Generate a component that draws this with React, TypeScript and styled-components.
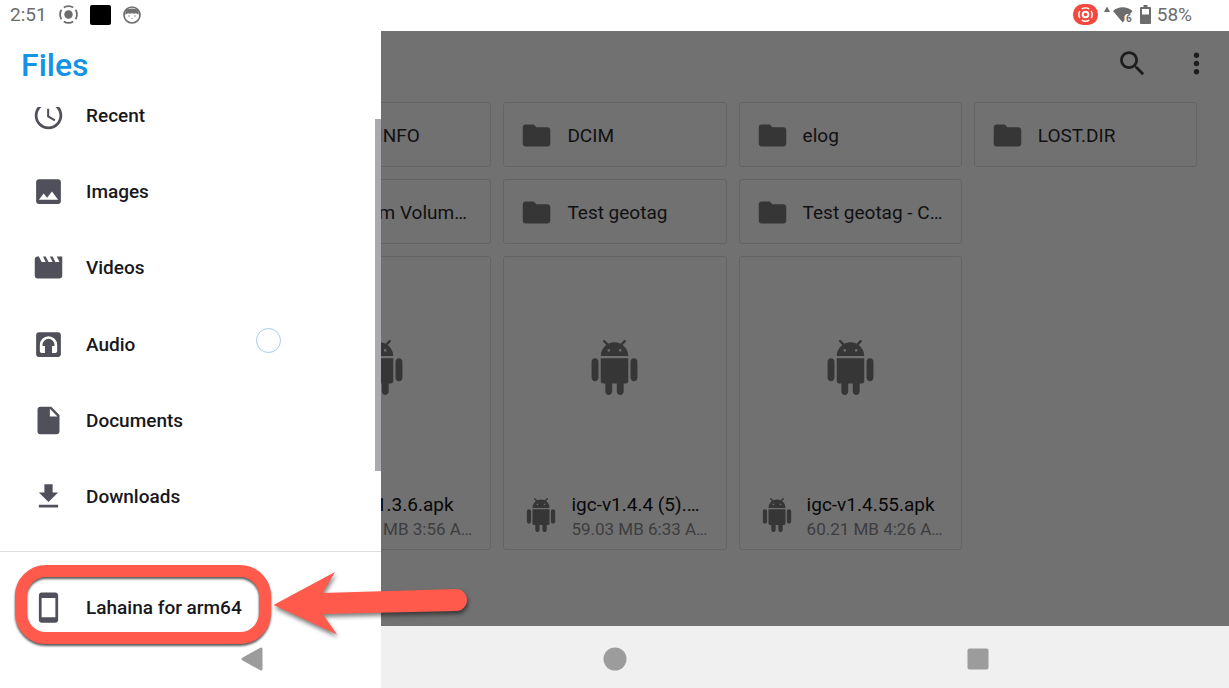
import React from "react";
import styled, { createGlobalStyle } from "styled-components";

const GlobalStyle = createGlobalStyle`
  * { box-sizing: border-box; }
  body { margin: 0; font-family: Roboto, "Liberation Sans", sans-serif; background: #fff; }
  button { font: inherit; color: inherit; background: none; border: 0; padding: 0; cursor: pointer; }
  ul { list-style: none; margin: 0; padding: 0; }
  h1, p { margin: 0; }
  svg { display: block; flex: none; }
`;

const paths = {
  clock:
    "M11.99 2C6.47 2 2 6.48 2 12s4.47 10 9.99 10C17.52 22 22 17.52 22 12S17.52 2 11.99 2zM12 20c-4.42 0-8-3.58-8-8s3.58-8 8-8 8 3.58 8 8-3.58 8-8 8zm.5-13H11v6l5.25 3.15.75-1.23-4.5-2.67z",
  image:
    "M21 19V5c0-1.1-.9-2-2-2H5c-1.1 0-2 .9-2 2v14c0 1.1.9 2 2 2h14c1.1 0 2-.9 2-2zM8.5 13.5l2.5 3.01L14.5 12l4.5 6H5l3.5-4.5z",
  movie:
    "M18 4l2 4h-3l-2-4h-2l2 4h-3l-2-4H8l2 4H7L5 4H4c-1.1 0-1.99.9-1.99 2L2 18c0 1.1.9 2 2 2h16c1.1 0 2-.9 2-2V4h-4z",
  audio:
    "M19 3H5c-1.1 0-2 .9-2 2v14c0 1.1.9 2 2 2h14c1.1 0 2-.9 2-2V5c0-1.1-.9-2-2-2zM14.6 18.2v-5.1h1.8v-.8a4.4 4.4 0 0 0-8.8 0v.8h1.8v5.1H7.1c-.8 0-1.4-.6-1.4-1.4v-4.5a6.3 6.3 0 0 1 12.6 0v4.5c0 .8-.6 1.4-1.4 1.4z",
  file: "M6 2c-1.1 0-1.99.9-1.99 2L4 20c0 1.1.89 2 1.99 2H18c1.1 0 2-.9 2-2V8l-6-6H6zm7 7V3.5L18.5 9H13z",
  download: "M19 9h-4V3H9v6H5l7 7 7-7zM5 18v2h14v-2H5z",
  phone:
    "M17 1.01L7 1c-1.1 0-2 .9-2 2v18c0 1.1.9 2 2 2h10c1.1 0 2-.9 2-2V3c0-1.1-.9-1.99-2-1.99zM17 19H7V5h10v14z",
  folder:
    "M10 4H4c-1.1 0-1.99.9-1.99 2L2 18c0 1.1.9 2 2 2h16c1.1 0 2-.9 2-2V8c0-1.1-.9-2-2-2h-8l-2-2z",
  search:
    "M15.5 14h-.79l-.28-.27C15.41 12.59 16 11.11 16 9.5 16 5.91 13.09 3 9.5 3S3 5.91 3 9.5 5.91 16 9.5 16c1.61 0 3.09-.59 4.23-1.57l.27.28v.79l5 4.99L20.49 19l-4.99-5zm-6 0C7.01 14 5 11.99 5 9.5S7.01 5 9.5 5 14 7.01 14 9.5 11.99 14 9.5 14z",
  more: "M12 8c1.1 0 2-.9 2-2s-.9-2-2-2-2 .9-2 2 .9 2 2 2zm0 2c-1.1 0-2 .9-2 2s.9 2 2 2 2-.9 2-2-.9-2-2-2zm0 6c-1.1 0-2 .9-2 2s.9 2 2 2 2-.9 2-2-.9-2-2-2z",
  android:
    "M6 18c0 .55.45 1 1 1h1v3.5c0 .83.67 1.5 1.5 1.5s1.5-.67 1.5-1.5V19h2v3.5c0 .83.67 1.5 1.5 1.5s1.5-.67 1.5-1.5V19h1c.55 0 1-.45 1-1V8H6v10zM3.5 8C2.67 8 2 8.67 2 9.5v7c0 .83.67 1.5 1.5 1.5S5 17.33 5 16.5v-7C5 8.67 4.33 8 3.5 8zm17 0c-.83 0-1.5.67-1.5 1.5v7c0 .83.67 1.5 1.5 1.5s1.5-.67 1.5-1.5v-7c0-.83-.67-1.5-1.5-1.5zm-4.97-5.84l1.3-1.3c.2-.2.2-.51 0-.71-.2-.2-.51-.2-.71 0l-1.48 1.48C13.85 1.23 12.95 1 12 1c-.96 0-1.86.23-2.66.63L7.85.15c-.2-.2-.51-.2-.71 0-.2.2-.2.51 0 .71l1.31 1.31C6.97 3.26 6 5.01 6 7h12c0-1.99-.97-3.75-2.47-4.84zM10 5H9V4h1v1zm5 0h-1V4h1v1z",
};

type IconName = keyof typeof paths;

function Icon({ name, size = 33 }: { name: IconName; size?: number }) {
  return (
    <svg width={size} height={size} viewBox="0 0 24 24" fill="currentColor" aria-hidden="true">
      <path fillRule="evenodd" d={paths[name]} />
    </svg>
  );
}

const Screen = styled.div`
  position: relative;
  display: flex;
  flex-direction: column;
  min-height: 100vh;
  overflow: hidden;
`;

/* Status bar */

const StatusBar = styled.header`
  display: flex;
  justify-content: space-between;
  height: 31px;
  padding: 0 37px 2px 10px;
  color: #6c6c6c;
  font-size: 19px;
  line-height: 30px;
`;

const StatusGroup = styled.div<{ $gap: number }>`
  display: flex;
  align-items: center;
  gap: ${(p) => p.$gap}px;
`;

const BlackSquare = styled.span`
  width: 21px;
  height: 20px;
  border-radius: 2px;
  background: #000;
`;

const CastBadge = styled.span`
  display: grid;
  place-items: center;
  width: 25px;
  height: 21px;
  border-radius: 10px;
  background: #f04a3e;
  color: #fff;
`;

function RingIcon({ size, hollow }: { size: number; hollow?: boolean }) {
  return (
    <svg width={size} height={size} viewBox="0 0 18 18" aria-hidden="true">
      {hollow ? (
        <circle cx="9" cy="9" r="3.400" fill="none" stroke="currentColor" strokeWidth="2.400" />
      ) : (
        <circle cx="9" cy="9" r="4" fill="currentColor" />
      )}
      <circle
        cx="9"
        cy="9"
        r="8"
        fill="none"
        stroke="currentColor"
        strokeWidth="1.700"
        pathLength="80"
        strokeDasharray="15 5"
        strokeDashoffset="7.500"
      />
    </svg>
  );
}

function CatIcon() {
  return (
    <svg width="18" height="18" viewBox="0 0 18 18" aria-hidden="true">
      <circle cx="9" cy="9" r="8" fill="#fff" stroke="#707070" strokeWidth="1.700" />
      <path d="M3 3.500L5.500 3Q9 2.200 12.500 3L15 3.500L15.800 8.800L13 7.300L11.500 7.700L9 7.200L6.500 7.700L5 7.300L2.200 8.800z" fill="#707070" />
      <circle cx="6" cy="10" r=".7" fill="#707070" />
      <circle cx="12" cy="10" r=".7" fill="#707070" />
      <circle cx="9" cy="12.500" r=".6" fill="#707070" />
    </svg>
  );
}

function WifiIcon() {
  return (
    <svg width="30" height="20" viewBox="0 0 30 20" aria-hidden="true">
      <path d="M3 1.500L6 7H0z" fill="currentColor" />
      <path d="M9 6C14.500 1 23 1 28.500 6L26 9h-3.500l-2 2v4.500L18.700 17.500z" fill="currentColor" />
      <text x="22" y="17" fontSize="10" fontWeight="700" fill="currentColor">
        6
      </text>
    </svg>
  );
}

function BatteryIcon() {
  return (
    <svg width="11" height="19" viewBox="0 0 11 19" aria-hidden="true">
      <path
        fillRule="evenodd"
        d="M3.500 0h4v2H10q1 0 1 1v15q0 1-1 1H1q-1 0-1-1V3q0-1 1-1h2.500zM2 4v5.500h7V4z"
        fill="currentColor"
      />
    </svg>
  );
}

/* File browser behind the drawer */

const Browser = styled.main`
  flex: 1;
  background: #717171;
  color: #101012;
`;

const Toolbar = styled.div`
  display: flex;
  justify-content: flex-end;
  align-items: center;
  gap: 31px;
  height: 64px;
  padding-right: 16px;
  color: #1d1d20;
`;

const FileGrid = styled.div`
  display: grid;
  grid-template-columns: repeat(5, minmax(0, 1fr));
  gap: 12px;
  padding: 7px 32px 12px 33px;
`;

const cardFrame = `
  border: 1px solid #646464;
  border-radius: 3px;
  overflow: hidden;
  white-space: nowrap;
  text-align: left;
`;

const FolderCard = styled.button<{ $column: number }>`
  ${cardFrame}
  grid-column: ${(p) => p.$column};
  display: flex;
  align-items: center;
  gap: 14px;
  height: 65px;
  padding: 1px 16px 0;
  font-size: 19px;

  svg { color: #363636; }
`;

const FileCard = styled.button<{ $column: number }>`
  ${cardFrame}
  grid-column: ${(p) => p.$column};
  display: flex;
  flex-direction: column;
`;

const Preview = styled.span`
  display: grid;
  place-items: center;
  width: 100%;
  aspect-ratio: 1;
  color: #363636;
`;

const FileFooter = styled.span`
  display: flex;
  align-items: center;
  gap: 13px;
  height: 71px;
  padding: 2px 20px 0;

  svg { color: #363636; }
`;

const FileText = styled.span`
  display: flex;
  flex-direction: column;
  padding-top: 4px;
  line-height: 24px;
`;

const FileName = styled.span`
  color: #070708;
  font-size: 19px;
`;

const FileMeta = styled.span`
  color: #3d3d3f;
  font-size: 17px;
`;

/* System navigation */

const NavBar = styled.nav`
  display: grid;
  grid-template-columns: repeat(3, 1fr);
  height: 62px;
  padding: 0 70px 0 71px;
  background: #f0f0f0;
  color: #9c9c9c;
`;

const NavButton = styled.button<{ $raised?: boolean }>`
  display: grid;
  place-items: center;
  padding-top: 4px;
  ${(p) => p.$raised && "position: relative; z-index: 3;"}
`;

/* Drawer */

const Drawer = styled.aside`
  position: absolute;
  z-index: 2;
  top: 31px;
  bottom: 0;
  left: 0;
  display: flex;
  flex-direction: column;
  width: 31%;
  background: #fff;
  color: #18181c;
`;

const DrawerTitle = styled.h1`
  height: 76px;
  padding: 14px 21px 0;
  color: #1492e6;
  font-size: 32px;
  font-weight: 500;
  line-height: 40px;
`;

const RootsViewport = styled.div`
  position: relative;
  display: flex;
  flex: 1;
  overflow: hidden;
`;

const RootsList = styled.ul`
  display: flex;
  flex: 1;
  flex-direction: column;
  margin-top: -30px;
  margin-bottom: 16px;
`;

const RootItem = styled.li`
  display: flex;
  flex: 1;
`;

const RootButton = styled.button`
  display: flex;
  flex: 1;
  align-items: center;
  gap: 21px;
  min-height: 76px;
  padding-left: 32px;
  font-size: 19px;
  font-weight: 500;
  white-space: nowrap;

  svg { color: #50505a; }
`;

const ScrollThumb = styled.span`
  position: absolute;
  top: 12px;
  right: 0;
  bottom: 80px;
  width: 6px;
  background: #a8a8ad;
`;

const TouchRing = styled.span`
  position: absolute;
  top: 221px;
  left: 256px;
  width: 25px;
  height: 25px;
  border: 1px solid #a9c9f4;
  border-radius: 50%;
`;

const DeviceSection = styled.div`
  position: relative;
  display: flex;
  height: 137px;
  padding-top: 17px;
  border-top: 1px solid #dedee0;
  align-items: flex-start;
`;

const Highlight = styled.span`
  position: absolute;
  top: 13px;
  left: 15px;
  width: 256px;
  height: 79px;
  border: 12px solid #ff5a4b;
  border-radius: 31px;
  filter: drop-shadow(0 2px 1px rgba(0, 0, 0, 0.65));
  pointer-events: none;
`;

const Arrow = styled.svg`
  position: absolute;
  top: 14px;
  left: 268px;
  overflow: visible;
  filter: drop-shadow(1px 3px 2px rgba(0, 0, 0, 0.5));
  pointer-events: none;
`;

const roots: { icon: IconName; label: string }[] = [
  { icon: "clock", label: "Recent" },
  { icon: "image", label: "Images" },
  { icon: "movie", label: "Videos" },
  { icon: "audio", label: "Audio" },
  { icon: "file", label: "Documents" },
  { icon: "download", label: "Downloads" },
];

const folders = [
  { column: 2, name: "LASTINFO" },
  { column: 3, name: "DCIM" },
  { column: 4, name: "elog" },
  { column: 5, name: "LOST.DIR" },
  { column: 2, name: "System Volum…" },
  { column: 3, name: "Test geotag" },
  { column: 4, name: "Test geotag - C…" },
];

const files = [
  { column: 2, name: "igc-v1.3.6.apk", meta: "58.97 MB 3:56 A…" },
  { column: 3, name: "igc-v1.4.4 (5).…", meta: "59.03 MB 6:33 A…" },
  { column: 4, name: "igc-v1.4.55.apk", meta: "60.21 MB 4:26 A…" },
];

export default function App() {
  return (
    <Screen>
      <GlobalStyle />
      <StatusBar>
        <StatusGroup $gap={12}>
          <span>2:51</span>
          <RingIcon size={19} />
          <BlackSquare />
          <CatIcon />
        </StatusGroup>
        <StatusGroup $gap={6}>
          <CastBadge>
            <RingIcon size={15} hollow />
          </CastBadge>
          <WifiIcon />
          <BatteryIcon />
          <span>58%</span>
        </StatusGroup>
      </StatusBar>

      <Browser>
        <Toolbar>
          <button aria-label="Search">
            <Icon name="search" />
          </button>
          <button aria-label="More options">
            <Icon name="more" />
          </button>
        </Toolbar>
        <FileGrid>
          {folders.map((f) => (
            <FolderCard key={f.name} $column={f.column}>
              <Icon name="folder" />
              <span>{f.name}</span>
            </FolderCard>
          ))}
          {files.map((f) => (
            <FileCard key={f.name} $column={f.column}>
              <Preview>
                <Icon name="android" size={55} />
              </Preview>
              <FileFooter>
                <Icon name="android" size={34} />
                <FileText>
                  <FileName>{f.name}</FileName>
                  <FileMeta>{f.meta}</FileMeta>
                </FileText>
              </FileFooter>
            </FileCard>
          ))}
        </FileGrid>
      </Browser>

      <NavBar>
        <NavButton $raised aria-label="Back">
          <svg width="22" height="24" viewBox="0 0 22 24" aria-hidden="true">
            <path
              d="M2 12L20 2v20z"
              fill="currentColor"
              stroke="currentColor"
              strokeWidth="3"
              strokeLinejoin="round"
            />
          </svg>
        </NavButton>
        <NavButton aria-label="Home">
          <svg width="24" height="24" viewBox="0 0 24 24" aria-hidden="true">
            <circle cx="12" cy="12" r="11.500" fill="currentColor" />
          </svg>
        </NavButton>
        <NavButton aria-label="Overview">
          <svg width="22" height="22" viewBox="0 0 22 22" aria-hidden="true">
            <rect x=".5" y=".5" width="21" height="21" rx="2" fill="currentColor" />
          </svg>
        </NavButton>
      </NavBar>

      <Drawer>
        <DrawerTitle>Files</DrawerTitle>
        <RootsViewport>
          <RootsList>
            {roots.map((r) => (
              <RootItem key={r.label}>
                <RootButton>
                  <Icon name={r.icon} />
                  {r.label}
                </RootButton>
              </RootItem>
            ))}
          </RootsList>
          <ScrollThumb />
          <TouchRing />
        </RootsViewport>
        <DeviceSection>
          <RootButton>
            <Icon name="phone" />
            Lahaina for arm64
          </RootButton>
          <Highlight />
          <Arrow width="200" height="76" viewBox="268 566 200 76" aria-hidden="true">
            <path
              d="M273.500 605L335 572L322.500 593L456 589A11 11 0 0 1 456 611L322.500 614L337 634.500Z"
              fill="#ff5a4b"
            />
          </Arrow>
        </DeviceSection>
      </Drawer>
    </Screen>
  );
}
